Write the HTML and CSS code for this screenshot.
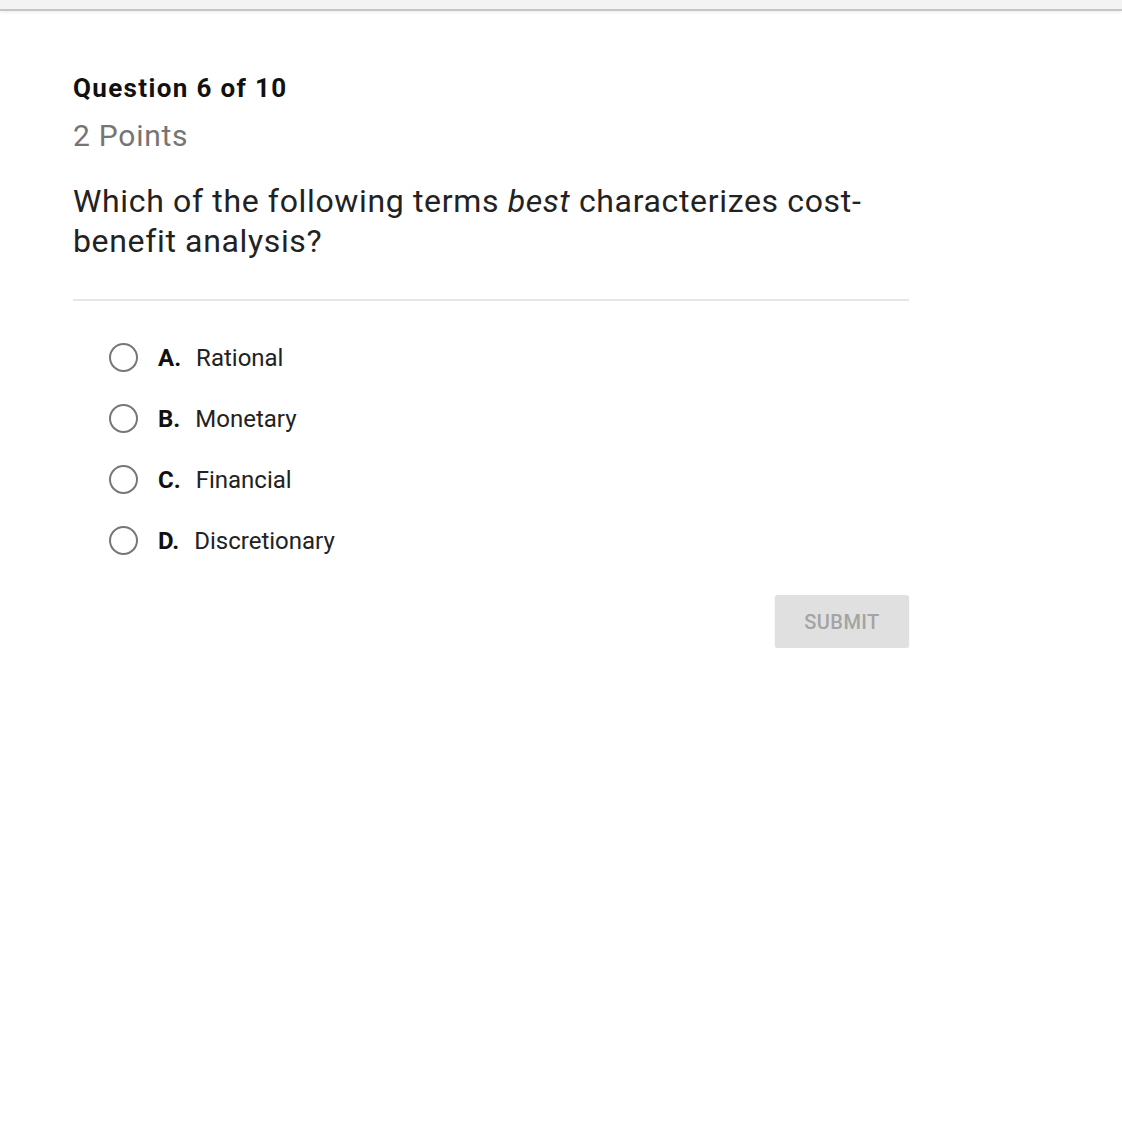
FILE: index.html
```html
<!DOCTYPE html>
<html>
<head>
<meta charset="utf-8">
<link rel="stylesheet" href="styles.css">
</head>
<body>
<div class="topbar"></div>
<main class="quiz">
  <div class="qnum">Question 6 of 10</div>
  <div class="points">2 Points</div>
  <div class="prompt">Which of the following terms <em>best</em> characterizes cost-benefit analysis?</div>
  <hr class="divider">
  <ul class="options">
    <li class="option"><span class="radio"></span><span class="letter">A.</span><span class="text">Rational</span></li>
    <li class="option"><span class="radio"></span><span class="letter">B.</span><span class="text">Monetary</span></li>
    <li class="option"><span class="radio"></span><span class="letter">C.</span><span class="text">Financial</span></li>
    <li class="option"><span class="radio"></span><span class="letter">D.</span><span class="text">Discretionary</span></li>
  </ul>
  <div class="actions"><button class="submit">SUBMIT</button></div>
</main>
</body>
</html>
```
FILE: styles.css
```css
html, body {
  margin: 0;
  padding: 0;
  background: #ffffff;
  font-family: Roboto, "Liberation Sans", sans-serif;
  color: #212121;
}
.topbar {
  height: 9px;
  background: #f3f3f3;
  border-bottom: 2px solid #c6c6c6;
  box-shadow: 0 2px 3px rgba(0,0,0,0.06);
}
.quiz {
  width: 836px;
  margin-left: 73px;
  padding-top: 60px;
}
.qnum {
  font-size: 26px;
  font-weight: 700;
  line-height: 34px;
  color: #111;
  letter-spacing: 1.35px;
}
.points {
  font-size: 30px;
  line-height: 36px;
  color: #757575;
  margin-top: 13px;
  letter-spacing: 0.75px;
}
.prompt {
  font-size: 32px;
  line-height: 40px;
  color: #222;
  margin-top: 27px;
  letter-spacing: 0.65px;
}
.prompt em {
  font-style: italic;
}
.divider {
  border: 0;
  border-top: 2px solid #e6e6e6;
  margin: 38px 0 0 0;
}
.options {
  list-style: none;
  margin: 0;
  padding: 26px 0 0 36px;
}
.option {
  display: flex;
  align-items: center;
  height: 61px;
  font-size: 24px;
}
.radio {
  width: 25px;
  height: 25px;
  border: 2.5px solid #777;
  border-radius: 50%;
  flex: none;
  margin-right: 20px;
}
.letter {
  font-weight: 700;
  color: #111;
  margin-right: 15px;
}
.text {
  color: #222;
}
.actions {
  display: flex;
  justify-content: flex-end;
  margin-top: 24px;
}
.submit {
  width: 134px;
  height: 53px;
  border: 0;
  border-radius: 3px;
  background: #e0e0e0;
  color: #a4a4a4;
  font-family: Roboto, "Liberation Sans", sans-serif;
  font-size: 20px;
  font-weight: 500;
  letter-spacing: 0.4px;
  box-shadow: 0 1px 2px rgba(0,0,0,0.08);
}
```
